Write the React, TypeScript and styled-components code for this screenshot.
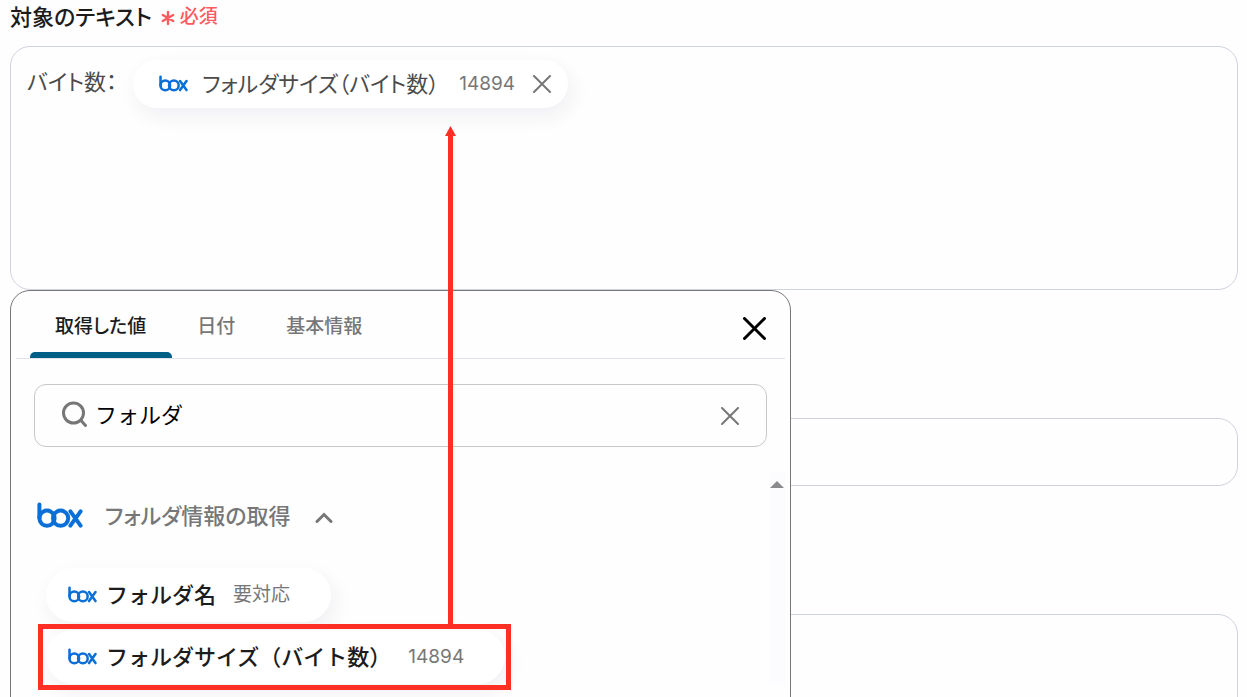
import React, { useState } from "react";
import styled, { createGlobalStyle } from "styled-components";

const GlobalStyle = createGlobalStyle`
  *, *::before, *::after { box-sizing: border-box; }
  body {
    margin: 0;
    background: #fefefe;
    color: #1c1c1c;
    font-family: Inter, "Noto Sans CJK JP", sans-serif;
  }
  button, input { font: inherit; color: inherit; }
`;

const Page = styled.main`
  height: 100vh;
  padding: 0 9px 0 10px;
  overflow: hidden;
`;

const FieldLabel = styled.div`
  display: flex;
  align-items: center;
  gap: 9px;
  height: 46px;
  padding-bottom: 12px;
  font-size: 22px;
  line-height: 32px;
  font-weight: 500;
  font-feature-settings: "palt";
`;

const Required = styled.span`
  display: flex;
  align-items: center;
  gap: 5px;
  color: #ff5a5f;
  font-size: 19px;
  font-feature-settings: normal;
`;

const FieldBox = styled.div<{ $height: number }>`
  height: ${(p) => p.$height}px;
  border: 1px solid #cfd3dd;
  border-radius: 20px;
`;

const Editor = styled(FieldBox)`
  display: flex;
  align-items: flex-start;
  gap: 16px;
  padding: 13px 16px;
  color: #4b4b4b;
  font-size: 22px;
  font-feature-settings: "palt";
`;

const EditorText = styled.span`
  line-height: 44px;
`;

const Chip = styled.span<{ $kind: "editor" | "list" }>`
  display: inline-flex;
  align-items: center;
  height: ${(p) => (p.$kind === "editor" ? 48 : 54)}px;
  padding: ${(p) => (p.$kind === "editor" ? "0 17px 0 26px" : "0 41px 0 22px")};
  border: 0;
  border-radius: 27px;
  background: #fff;
  box-shadow: 4px 8px 20px rgba(60, 40, 80, 0.07);
  white-space: nowrap;
`;

const ChipName = styled.span<{ $strong?: boolean }>`
  margin: ${(p) => (p.$strong ? "0 17px 0 9px" : "0 20px 0 14px")};
  font-size: 22px;
  line-height: 32px;
  font-weight: ${(p) => (p.$strong ? 500 : 400)};
`;

const ChipValue = styled.span`
  color: #777;
  font-size: 19px;
  line-height: 32px;
  font-weight: 400;
`;

const IconButton = styled.button`
  display: flex;
  padding: 0;
  margin-left: 18px;
  border: 0;
  background: none;
  cursor: pointer;
`;

const LowerFields = styled.div`
  position: relative;
  display: flex;
  flex-direction: column;
  gap: 128px;
  padding-top: 128px;
`;

const Picker = styled.section`
  position: absolute;
  z-index: 1;
  top: 0;
  left: 0;
  width: 781px;
  max-width: 100%;
  padding: 0 5px 60px;
  border: 1px solid #777;
  border-radius: 20px;
  background: #fefefe;
`;

const TabBar = styled.div`
  display: flex;
  align-items: stretch;
  height: 68px;
  padding: 0 19px 0 14px;
  border-bottom: 1px solid #e1e4ea;
`;

const Tab = styled.button<{ $active: boolean }>`
  position: relative;
  padding: 4px 26px 0 25px;
  border: 0;
  background: none;
  color: ${(p) => (p.$active ? "#1c1c1c" : "#777")};
  font-size: 19px;
  font-weight: 500;
  line-height: 28px;
  font-feature-settings: "palt";
  cursor: pointer;

  &::after {
    content: "";
    display: ${(p) => (p.$active ? "block" : "none")};
    position: absolute;
    left: 0;
    right: 0;
    bottom: 0;
    height: 6px;
    border-radius: 5px 5px 0 0;
    background: #005f86;
  }
`;

const TabClose = styled(IconButton)`
  align-items: center;
  margin-left: auto;
  padding-top: 7px;
`;

const SearchBox = styled.label`
  display: flex;
  align-items: center;
  height: 63px;
  margin: 25px 18px 0;
  padding: 0 27px 0 26px;
  border: 1px solid #c8c8cc;
  border-radius: 12px;
`;

const SearchInput = styled.input`
  flex: 1;
  min-width: 0;
  margin-left: 8px;
  padding: 0 0 2px;
  border: 0;
  outline: 0;
  background: transparent;
  color: #000;
  font-size: 22px;
  line-height: 32px;
`;

const Results = styled.div`
  position: relative;
  margin-top: 25px;
  padding: 28px 20px 0 21px;
`;

const ScrollTrack = styled.div`
  position: absolute;
  top: 0;
  right: 0;
  bottom: 0;
  width: 16px;
  padding: 0 1px;
  background: #fcfbfd;
`;

const Group = styled.button`
  display: flex;
  align-items: center;
  height: 32px;
  padding: 0;
  border: 0;
  background: none;
  color: #777;
  font-size: 22px;
  line-height: 32px;
  font-weight: 500;
  font-feature-settings: "palt";
  cursor: pointer;
`;

const GroupName = styled.span`
  margin: 0 25px 0 22px;
`;

const ChipList = styled.ul`
  display: flex;
  flex-direction: column;
  align-items: flex-start;
  gap: 8px;
  margin: 36px 0 0;
  padding: 0 0 0 9px;
  list-style: none;
`;

const ChipItem = styled.li`
  position: relative;
  display: flex;
`;

const Highlight = styled.div`
  position: absolute;
  inset: -6px -6px -6px -8px;
  border: 5px solid #ff2f25;
  pointer-events: none;
`;

const Arrow = styled.svg`
  position: absolute;
  right: 50px;
  bottom: 100%;
  width: 11px;
  height: 503px;
`;

function BoxLogo({ width, height }: { width: number; height: number }) {
  return (
    <svg width={width} height={height} viewBox="0 0 46 28" fill="none" stroke="#0a6fd6" strokeWidth="4" strokeLinecap="round" aria-label="box" role="img">
      <path d="M2.4 2.6V16" />
      <circle cx="10" cy="16.2" r="7.6" />
      <circle cx="23.6" cy="16.2" r="7.6" />
      <path d="M33.4 9.4L43.6 23.6M43.6 9.4L33.4 23.6" />
    </svg>
  );
}

function Cross({ size, width, color }: { size: number; width: number; color: string }) {
  const end = size - width / 2;
  const start = width / 2;
  return (
    <svg width={size} height={size} stroke={color} strokeWidth={width} strokeLinecap="round" aria-hidden="true">
      <path d={`M${start} ${start}L${end} ${end}M${end} ${start}L${start} ${end}`} />
    </svg>
  );
}

const tabs = ["取得した値", "日付", "基本情報"];

export default function App() {
  const [tab, setTab] = useState(tabs[0]);
  const [query, setQuery] = useState("フォルダ");

  return (
    <>
      <GlobalStyle />
      <Page>
        <FieldLabel id="target-label">
          対象のテキスト
          <Required>
            <svg width="14" height="16" viewBox="0 0 14 16" stroke="currentColor" strokeWidth="2.4" strokeLinecap="round" aria-hidden="true">
              <path d="M7 3V15M1.8 6L12.2 12M12.2 6L1.8 12" />
            </svg>
            必須
          </Required>
        </FieldLabel>
        <Editor $height={244} role="group" aria-labelledby="target-label">
          <EditorText>バイト数：</EditorText>
          <Chip $kind="editor">
            <BoxLogo width={29} height={18} />
            <ChipName>フォルダサイズ（バイト数）</ChipName>
            <ChipValue>14894</ChipValue>
            <IconButton aria-label="削除">
              <Cross size={18} width={2} color="#777" />
            </IconButton>
          </Chip>
        </Editor>

        <LowerFields>
          <Picker>
            <TabBar role="tablist">
              {tabs.map((name) => (
                <Tab key={name} role="tab" aria-selected={tab === name} $active={tab === name} onClick={() => setTab(name)}>
                  {name}
                </Tab>
              ))}
              <TabClose aria-label="閉じる">
                <Cross size={23} width={3} color="#000" />
              </TabClose>
            </TabBar>
            <SearchBox>
              <svg width="26" height="30" viewBox="0 0 26 30" fill="none" stroke="#777" strokeWidth="3" strokeLinecap="round" aria-hidden="true">
                <circle cx="12.5" cy="12" r="10" />
                <path d="M20 19.5L24.5 24.5" />
              </svg>
              <SearchInput aria-label="検索" value={query} onChange={(e) => setQuery(e.target.value)} />
              <IconButton aria-label="クリア" onClick={() => setQuery("")}>
                <Cross size={18} width={2} color="#777" />
              </IconButton>
            </SearchBox>
            <Results>
              <ScrollTrack aria-hidden="true">
                <svg width="14" height="7" viewBox="0 0 14 7">
                  <path d="M7 0L14 7H0Z" fill="#8b8b8b" />
                </svg>
              </ScrollTrack>
              <Group aria-expanded="true">
                <BoxLogo width={46} height={28} />
                <GroupName>フォルダ情報の取得</GroupName>
                <svg width="18" height="16" viewBox="0 0 18 16" fill="none" stroke="#777" strokeWidth="3" strokeLinecap="round" aria-hidden="true">
                  <path d="M2 13.5L9 6.5L16 13.5" />
                </svg>
              </Group>
              <ChipList>
                <ChipItem>
                  <Chip as="button" $kind="list">
                    <BoxLogo width={29} height={18} />
                    <ChipName $strong>フォルダ名</ChipName>
                    <ChipValue>要対応</ChipValue>
                  </Chip>
                </ChipItem>
                <ChipItem>
                  <Chip as="button" $kind="list">
                    <BoxLogo width={29} height={18} />
                    <ChipName $strong>フォルダサイズ（バイト数）</ChipName>
                    <ChipValue>14894</ChipValue>
                  </Chip>
                  <Highlight>
                    <Arrow viewBox="0 0 11 503" fill="#ff2f25" aria-hidden="true">
                      <path d="M5.5 0L11 10H8V503H3V10H0Z" />
                    </Arrow>
                  </Highlight>
                </ChipItem>
              </ChipList>
            </Results>
          </Picker>
          <FieldBox $height={68} />
          <FieldBox $height={244} />
        </LowerFields>
      </Page>
    </>
  );
}
